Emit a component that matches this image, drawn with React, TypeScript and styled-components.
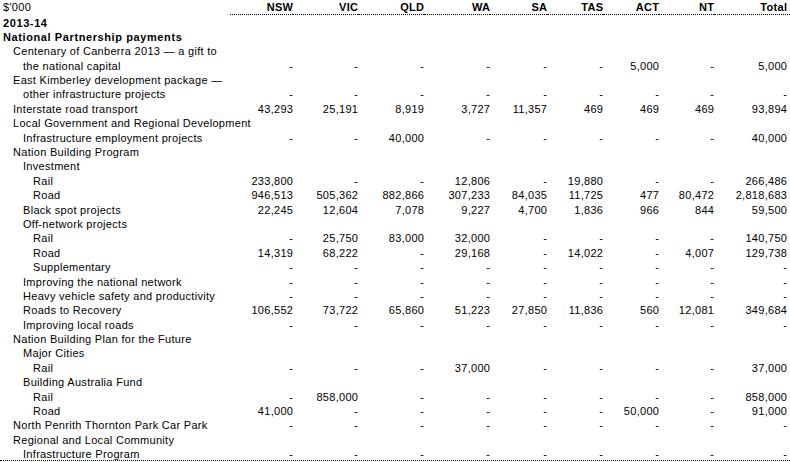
import React from "react";
import styled, { createGlobalStyle } from "styled-components";

const Global = createGlobalStyle`
  html, body { margin: 0; padding: 0; background: #fff; }
  body { font-family: "Liberation Sans", Arial, sans-serif; color: #000; }
`;

const Sheet = styled.div`
  width: 790px;
  height: 462px;
  overflow: hidden;
  font-size: 11px;
  letter-spacing: 0.3px;
  display: flex;
  flex-direction: column;
`;

const Row = styled.div<{ $head?: boolean; $last?: boolean }>`
  display: grid;
  grid-template-columns: 230px 63px 65px 66px 66px 57px 56px 56px 55px 76px;
  height: ${(p) => (p.$head ? "14px" : "14.4px")};
  line-height: ${(p) => (p.$head ? "13px" : "14.4px")};
  border-bottom: ${(p) => (p.$last ? "1px dotted #000" : "none")};
  box-sizing: content-box;
  flex: none;
`;

const Cell = styled.div<{ $head?: boolean }>`
  box-sizing: border-box;
  padding-top: ${(p) => (p.$head ? "1px" : "1.5px")};
  white-space: nowrap;
`;

const Label = styled(Cell)<{ $level: number; $bold?: boolean }>`
  padding-left: ${(p) => 3 + p.$level * 10}px;
  font-weight: ${(p) => (p.$bold ? 700 : 400)};
  letter-spacing: ${(p) => (p.$bold ? "0.6px" : "0.3px")};
`;

const Num = styled(Cell)<{ $end?: boolean }>`
  text-align: right;
  font-weight: ${(p) => (p.$head ? 700 : 400)};
  padding-right: ${(p) => (p.$end ? "3px" : "0")};
  border-bottom: ${(p) => (p.$head ? "1px dotted #000" : "none")};
  span {
    margin-right: -0.3px;
  }
`;

const cols = ["NSW", "VIC", "QLD", "WA", "SA", "TAS", "ACT", "NT", "Total"];

type R = { l: string; v?: number; b?: boolean; n?: string[] };
const D = "-";
const dashes = [D, D, D, D, D, D, D, D, D];

const rows: R[] = [
  { l: "2013-14", v: 0, b: true },
  { l: "National Partnership payments", v: 0, b: true },
  { l: "Centenary of Canberra 2013 \u2014 a gift to", v: 1 },
  { l: "the national capital", v: 2, n: [D, D, D, D, D, D, "5,000", D, "5,000"] },
  { l: "East Kimberley development package \u2014", v: 1 },
  { l: "other infrastructure projects", v: 2, n: dashes },
  { l: "Interstate road transport", v: 1, n: ["43,293", "25,191", "8,919", "3,727", "11,357", "469", "469", "469", "93,894"] },
  { l: "Local Government and Regional Development", v: 1 },
  { l: "Infrastructure employment projects", v: 2, n: [D, D, "40,000", D, D, D, D, D, "40,000"] },
  { l: "Nation Building Program", v: 1 },
  { l: "Investment", v: 2 },
  { l: "Rail", v: 3, n: ["233,800", D, D, "12,806", D, "19,880", D, D, "266,486"] },
  { l: "Road", v: 3, n: ["946,513", "505,362", "882,866", "307,233", "84,035", "11,725", "477", "80,472", "2,818,683"] },
  { l: "Black spot projects", v: 2, n: ["22,245", "12,604", "7,078", "9,227", "4,700", "1,836", "966", "844", "59,500"] },
  { l: "Off-network projects", v: 2 },
  { l: "Rail", v: 3, n: [D, "25,750", "83,000", "32,000", D, D, D, D, "140,750"] },
  { l: "Road", v: 3, n: ["14,319", "68,222", D, "29,168", D, "14,022", D, "4,007", "129,738"] },
  { l: "Supplementary", v: 3, n: dashes },
  { l: "Improving the national network", v: 2, n: dashes },
  { l: "Heavy vehicle safety and productivity", v: 2, n: dashes },
  { l: "Roads to Recovery", v: 2, n: ["106,552", "73,722", "65,860", "51,223", "27,850", "11,836", "560", "12,081", "349,684"] },
  { l: "Improving local roads", v: 2, n: dashes },
  { l: "Nation Building Plan for the Future", v: 1 },
  { l: "Major Cities", v: 2 },
  { l: "Rail", v: 3, n: [D, D, D, "37,000", D, D, D, D, "37,000"] },
  { l: "Building Australia Fund", v: 2 },
  { l: "Rail", v: 3, n: [D, "858,000", D, D, D, D, D, D, "858,000"] },
  { l: "Road", v: 3, n: ["41,000", D, D, D, D, D, "50,000", D, "91,000"] },
  { l: "North Penrith Thornton Park Car Park", v: 1, n: dashes },
  { l: "Regional and Local Community", v: 1 },
  { l: "Infrastructure Program", v: 2, n: dashes },
];

const empty = ["", "", "", "", "", "", "", "", ""];

export default function App() {
  return (
    <>
      <Global />
      <Sheet>
        <Row $head>
          <Label $head $level={0}>$'000</Label>
          {cols.map((c, i) => (
            <Num key={c} $head $end={i === cols.length - 1}>
              <span>{c}</span>
            </Num>
          ))}
        </Row>
        {rows.map((r, i) => (
          <Row key={i} $last={i === rows.length - 1}>
            <Label $level={r.v ?? 0} $bold={r.b}>
              {r.l}
            </Label>
            {(r.n ?? empty).map((x, j) => (
              <Num key={j} $end={j === 8}>
                <span>{x}</span>
              </Num>
            ))}
          </Row>
        ))}
      </Sheet>
    </>
  );
}
